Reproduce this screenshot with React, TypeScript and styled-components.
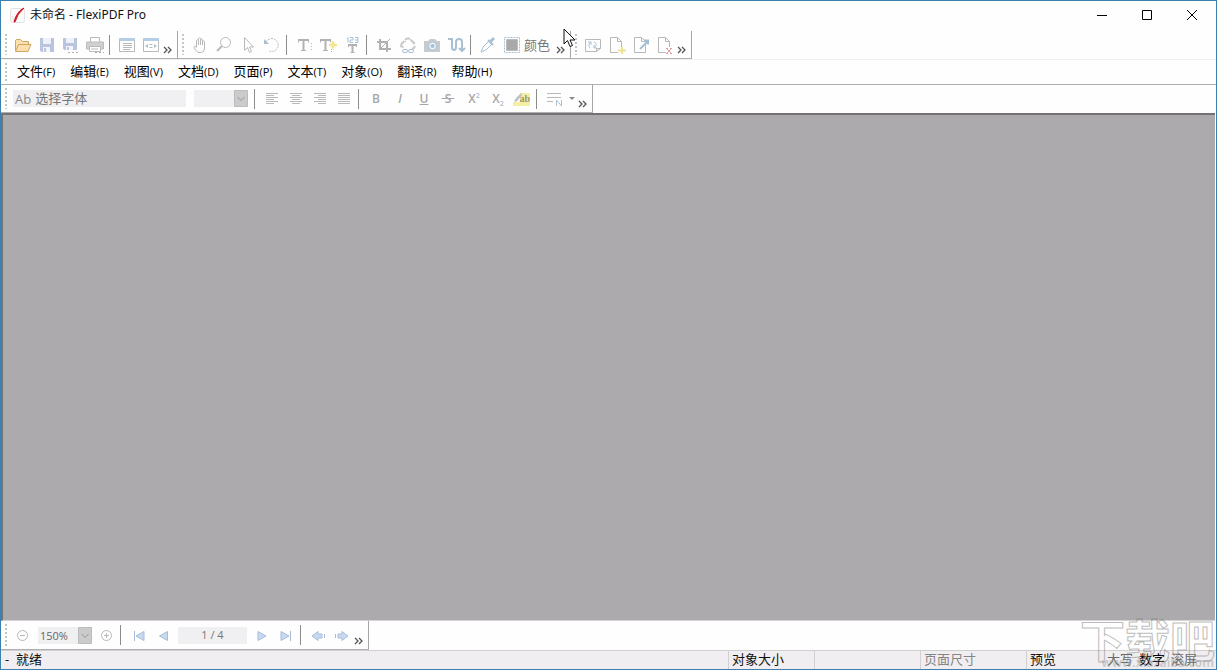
import React from 'react';
import styled, { createGlobalStyle } from 'styled-components';

const GlobalStyle = createGlobalStyle`
  * { box-sizing: border-box; }
  body { margin: 0; }
  body, button, input, select {
    font-family: 'Open Sans', 'Noto Sans CJK SC', sans-serif;
  }
`;

const Window = styled.div`
  position: relative;
  display: flex;
  flex-direction: column;
  height: 100vh;
  overflow: hidden;
  background: #fefefe;
  border: 1px solid #3d7fae;
  color: #111;
  font-size: 13px;
`;

const TitleBar = styled.header`
  display: flex;
  align-items: center;
  flex: none;
  height: 30px;
  padding: 0 2px 2px 8px;
`;

const Title = styled.h1`
  flex: 1;
  margin: 0 0 0 4px;
  font-family: 'Noto Sans', 'Noto Sans CJK SC', sans-serif;
  font-size: 12px;
  font-weight: 400;
  line-height: 20px;
`;

const WindowButton = styled.button`
  display: grid;
  place-items: center;
  width: 45px;
  height: 28px;
  padding: 0;
  border: 0;
  background: none;
`;

const ToolbarRow = styled.div<{ $height: number }>`
  display: flex;
  flex: none;
  height: ${(p) => p.$height}px;
`;

const ToolGroup = styled.div`
  display: flex;
  align-items: center;
  border-right: 1px solid #a5a5a5;
  border-bottom: 1px solid #b0b0b0;
`;

const Grip = styled.span`
  align-self: stretch;
  flex: none;
  width: 2px;
  margin: 3px 4px 3px 4px;
  background: repeating-linear-gradient(#c4c4c4 0 2px, transparent 2px 4px);
`;

const Separator = styled.span`
  flex: none;
  width: 1px;
  height: 20px;
  margin: 0 5px 0 2px;
  background: #8c8c8c;
`;

const ToolButton = styled.button<{ $wide?: boolean }>`
  display: flex;
  align-items: center;
  justify-content: center;
  flex: none;
  gap: 2px;
  width: ${(p) => (p.$wide ? 'auto' : '24px')};
  height: 24px;
  padding: 0 ${(p) => (p.$wide ? '2px' : '0')};
  border: 0;
  background: none;
  color: #777;
  font-size: 13px;
  line-height: 20px;
`;

const MoreButton = styled.button`
  display: grid;
  place-items: center;
  align-self: flex-end;
  flex: none;
  width: 9px;
  height: 16px;
  margin: 0 5px 0 0;
  padding: 0;
  border: 0;
  background: none;
`;

const Gap = styled.span<{ $size: number }>`
  flex: none;
  width: ${(p) => p.$size}px;
`;

const MenuBar = styled.nav`
  display: flex;
  align-items: center;
  flex: none;
  height: 26px;
  border-top: 1px solid #f0f0f0;
  border-bottom: 1px solid #b0b0b0;
`;

const MenuList = styled.div`
  display: flex;
  gap: 15px;
  padding: 0 0 2px 6px;
`;

const MenuButton = styled.button`
  padding: 0;
  border: 0;
  background: none;
  color: #000;
  font-size: 13px;
  line-height: 20px;
  white-space: nowrap;

  small { font-size: 11px; }
`;

const Field = styled.label<{ $width: number }>`
  display: flex;
  align-items: center;
  flex: none;
  gap: 4px;
  width: ${(p) => p.$width}px;
  height: 17px;
  padding: 0 2px;
  overflow: hidden;
  background: #f0eff1;
  color: #8a8a8a;
  font-size: 13px;
  line-height: 16px;
`;

const FieldInput = styled.input<{ $center?: boolean }>`
  flex: 1;
  min-width: 0;
  height: 17px;
  padding: 0 0 2px;
  border: 0;
  background: none;
  color: #777;
  font-size: ${(p) => (p.$center ? 11 : 13)}px;
  text-align: ${(p) => (p.$center ? 'center' : 'left')};
`;

const SelectBox = styled.span`
  display: flex;
  flex: none;
  position: relative;
  width: 54px;
  height: 17px;

  svg {
    position: absolute;
    right: 0;
    top: 0;
    pointer-events: none;
  }
`;

const Select = styled.select`
  appearance: none;
  width: 100%;
  height: 17px;
  padding: 0 14px 0 2px;
  border: 0;
  border-radius: 0;
  background: #f0eff1;
  color: #666;
  font-size: 11px;
`;

const Workspace = styled.main`
  flex: 1;
  min-height: 0;
  margin-right: 1px;
  border-top: 2px solid #747274;
  border-left: 2px solid #747478;
  border-bottom: 1px solid #d4d4d4;
  background: #acaaac;
`;

const StatusBar = styled.footer`
  display: flex;
  flex: none;
  height: 19px;
  border-top: 1px solid #cfcfcf;
  background: #f0eef0;
  line-height: 17px;
`;

const StatusCell = styled.span<{ $width?: number; $muted?: boolean }>`
  flex: ${(p) => (p.$width ? 'none' : '1')};
  width: ${(p) => (p.$width ? `${p.$width}px` : 'auto')};
  padding-left: ${(p) => (p.$width ? 3 : 4)}px;
  border-left: ${(p) => (p.$width ? '1px solid #d2d0d2' : '0')};
  color: ${(p) => (p.$muted ? '#858585' : '#111')};
  white-space: pre;
`;

const LockKeys = styled.span`
  display: flex;
  gap: 6px;
  padding-right: 19px;
`;

const LockKey = styled.span<{ $on?: boolean }>`
  color: ${(p) => (p.$on ? '#000' : '#6a6a6a')};
`;

const Watermark = styled.div`
  position: absolute;
  right: 1px;
  bottom: 0;
  color: transparent;
  font-family: 'Noto Sans CJK SC', sans-serif;
  font-size: 45px;
  font-weight: 700;
  line-height: 60px;
  pointer-events: none;
  -webkit-text-stroke: 1px rgba(120, 120, 120, 0.5);
`;

const WatermarkSite = styled.div`
  position: absolute;
  right: 2px;
  bottom: 0;
  color: rgba(130, 130, 130, 0.35);
  font-size: 12px;
  font-weight: 700;
  line-height: 12px;
  pointer-events: none;
`;

const Pointer = styled.svg`
  position: absolute;
  left: 562px;
  top: 27px;
  pointer-events: none;
`;

const G = '#b9b9b9';
const B = '#a9c0d3';

const icons: Record<string, React.ReactNode> = {
  open: (
    <g fill="#fbe0ae" stroke="#cfa566">
      <path d="M2.500 15.500v-10l1-1h4l2 2h6v3" />
      <path d="M2.500 16.500l3-7h12.500l-3 7z" />
    </g>
  ),
  save: (
    <g>
      <path d="M3 3h14v14H4.500L3 15.500z" fill="#b9c4e0" />
      <path d="M6 3h8v6H6z" fill="#eef1f8" />
      <path d="M6 12h7v5H6z" fill="#f4f5fa" />
      <path d="M7 13h2v4H7z" fill="#b9c4e0" />
    </g>
  ),
  saveAs: (
    <g>
      <path d="M2 3h14v12H3.500L2 13.500z" fill="#b9c4e0" />
      <path d="M5 3h8v5H5z" fill="#eef1f8" />
      <path d="M5 11h7v4H5z" fill="#f4f5fa" />
      <path d="M6 12h2v3H6z" fill="#b9c4e0" />
      <path d="M7 17.500h2M11 17.500h2M15 17.500h2" stroke="#b0b0b0" />
    </g>
  ),
  print: (
    <g>
      <path d="M5.500 7V2.500h9V7" fill="#fff" stroke={G} />
      <path d="M1.500 7h17v7h-17z" fill="#d0d0d0" stroke="#bcbcbc" />
      <path d="M4.500 11.500h11v5h-11z" fill="#fff" stroke={G} />
      <path d="M6 14h7" stroke={G} />
      <path d="M10 17.500h2M14 17.500h2M18 17.500h1" stroke="#a5a5a5" />
    </g>
  ),
  panel: (
    <g>
      <path d="M2.500 3.500h15v13h-15z" fill="#fff" stroke={G} />
      <path d="M2 3h16v3H2z" fill="#b5cde6" />
      <path d="M6 8.500h9M6 10.500h9M6 12.500h9M6 14.500h7" stroke={G} />
    </g>
  ),
  fitPanel: (
    <g>
      <path d="M2.500 3.500h15v13h-15z" fill="#fff" stroke={G} />
      <path d="M2 3h16v3H2z" fill="#b5cde6" />
      <path d="M8.500 9.500h3M8.500 12.500h3" stroke={G} />
      <path d="M7 9v4l-3-2zM13 9v4l3-2z" fill={B} />
    </g>
  ),
  hand: (
    <path
      d="M6.500 12V5.500q1-1.500 2 0V10V3.500q1-1.500 2 0V10V4.500q1-1.500 2 0V10V6.500q1-1.500 2 0V13q0 4-3 4.500H8Q6 16 4 12.500 3.500 10 6.500 12.500"
      fill="none" stroke={G}
    />
  ),
  zoom: (
    <g fill="none" stroke={G}>
      <circle cx="11.500" cy="7.500" r="5" />
      <path d="M8 11l-5 5" strokeWidth="2" />
    </g>
  ),
  arrow: <path d="M6.500 2.500v13l3-3 2 5 2-1-2-4.500h4z" fill="none" stroke={G} />,
  rotate: (
    <g fill="none">
      <path d="M4 7a6.500 6.500 0 1 1 3 9" stroke={G} strokeDasharray="2 1" />
      <path d="M2 4v5h5z" fill={B} />
    </g>
  ),
  text: (
    <g fill="none" stroke="#b2b2b2">
      <path d="M4.500 7.500v-3h10v3M7 15.500h5" />
      <path d="M4 5h11M9.500 5v11" strokeWidth="2" />
      <path d="M17.500 8v9" stroke={G} strokeDasharray="1 2" />
    </g>
  ),
  textNew: (
    <g fill="none" stroke="#b2b2b2">
      <path d="M2.500 7.500v-3h10v3M5 15.500h5" />
      <path d="M2 5h11M7.500 5v11" strokeWidth="2" />
      <path d="M13.500 14v3" strokeDasharray="1 1" />
      <path d="M15 6v8M11 10h8" stroke="#f3e48c" strokeWidth="2" />
      <path d="M12.500 7.500l5 5M17.500 7.500l-5 5" stroke="#f6eba6" />
    </g>
  ),
  textNumber: (
    <g fill="none">
      <path d="M5 3.500l1-1v5M8 2.500h3V5H8v2.500h3M13 2.500h3v5h-3M13 5h3" stroke={B} />
      <path d="M6.500 12v-2.500h8V12M8.500 17.500h4" stroke="#b2b2b2" />
      <path d="M6 10h9M10.500 10v8" stroke="#b2b2b2" strokeWidth="2" />
    </g>
  ),
  crop: (
    <g fill="none" stroke="#b2b2b2">
      <path d="M6 4v10h11M3 7h10v10" strokeWidth="2" />
      <path d="M7 13l9-9" />
    </g>
  ),
  link: (
    <g fill="none" stroke="#c8c8c8">
      <path d="M5.500 12.500L3 11l1-3 2-1M7 5l2-1.500h3M13 5l3 3-1 1M17 11l-1 2-2 1" strokeWidth="2" />
      <path d="M5 6l3 1M12 4l2 3" />
      <rect x="4.500" y="14.500" width="5" height="3" rx="1.500" stroke={B} />
      <rect x="10.500" y="14.500" width="5" height="3" rx="1.500" stroke={B} />
    </g>
  ),
  camera: (
    <g>
      <path d="M2 6h4l2-2h5l2 2h3v11H2z" fill="#c6cbd0" />
      <circle cx="10.500" cy="11" r="4" fill="#eef5fa" stroke="#a9c3d8" />
      <circle cx="10.500" cy="11" r="2" fill={B} />
    </g>
  ),
  flow: (
    <g fill="none" stroke={B} strokeWidth="2">
      <path d="M2 4h4v8q0 3 2 3t2-3V7q0-3 3-3t3 3v8" />
      <path d="M13 13l3 3 3-3" />
    </g>
  ),
  dropper: (
    <g fill="none" stroke={B}>
      <path d="M3 17l2-5 6-6 3 3-6 6z" />
      <path d="M10 5l5 5" strokeWidth="2" />
      <path d="M12 7l4-4" strokeWidth="3" />
    </g>
  ),
  color: (
    <g>
      <path d="M2.500 2.500h15v15h-15z" fill="none" stroke={B} strokeDasharray="2 1" />
      <path d="M5 5h10v10H5z" fill="#a9a9a9" />
      <path d="M4.500 4.500h11v11h-11z" fill="none" stroke="#bdbdbd" />
    </g>
  ),
  refreshPage: (
    <g fill="none">
      <path d="M2.500 4.500h15v9l-4 3h-11zM13.500 16.500v-3h4" stroke={G} />
      <path d="M7 13q-3-3 0-5l1-1M5 7h3v3M11 7q4 2 1 5l-1 1M14 13h-3v-3" stroke={B} />
    </g>
  ),
  addPage: (
    <g>
      <path d="M3.500 2.500h7l4 4v11h-11zM10.500 2.500v4h4" fill="none" stroke={G} />
      <path d="M11 12h8v8h-8z" fill="#fefefe" />
      <path d="M15 12v7M11 15.500h8" stroke="#f0e290" strokeWidth="2" />
    </g>
  ),
  editPage: (
    <g>
      <path d="M3.500 2.500h7l4 4v11h-11zM10.500 2.500v4h4" fill="none" stroke={G} />
      <path d="M9 14l8-8M13 5.500h4v4" fill="none" stroke="#a3bfd6" strokeWidth="2" />
    </g>
  ),
  deletePage: (
    <g>
      <path d="M3.500 2.500h7l4 4v11h-11zM10.500 2.500v4h4" fill="none" stroke={G} />
      <path d="M11 12h7v7h-7z" fill="#fefefe" />
      <path d="M11.500 13.500l5 5M16.500 13.500l-5 5M11 13.500h2M15 13.500h2M11 18.500h2M15 18.500h2" stroke="#dfa0a0" />
    </g>
  ),
  alignLeft: <path d="M4 4.500h12M4 6.500h8M4 8.500h12M4 10.500h8M4 12.500h12M4 14.500h8" stroke={G} />,
  alignCenter: <path d="M4 4.500h12M6 6.500h8M4 8.500h12M6 10.500h8M4 12.500h12M6 14.500h8" stroke={G} />,
  alignRight: <path d="M4 4.500h12M8 6.500h8M4 8.500h12M8 10.500h8M4 12.500h12M8 14.500h8" stroke={G} />,
  justify: <path d="M4 4.500h12M4 6.500h12M4 8.500h12M4 10.500h12M4 12.500h12M4 14.500h12" stroke={G} />,
  highlight: (
    <g>
      <path d="M1 13h17v4H1zM8 4h10v10H8z" fill="#f6efa2" />
      <path d="M2 12l3-4 2 2-3 3zM5 8l4-4 1 2-3 4z" fill="#b9c3c8" />
    </g>
  ),
  lines: (
    <g fill="none">
      <path d="M3 4.500h14M3 8.500h14M3 12.500h6" stroke={G} />
      <path d="M12.500 17v-6l5 6v-6" stroke={B} />
    </g>
  ),
  minus: (
    <g fill="none" stroke={G}>
      <circle cx="9.500" cy="10.500" r="5" />
      <path d="M7 10.500h5" />
    </g>
  ),
  plus: (
    <g fill="none" stroke={G}>
      <circle cx="10.500" cy="10.500" r="5" />
      <path d="M8 10.500h5M10.500 8v5" />
    </g>
  ),
  first: <path d="M5.500 6v10M15 6.500v9L7 11z" fill="#c9daf0" stroke="#a5bddb" />,
  previous: <path d="M14.500 6.500v9l-8-4.500z" fill="#c9daf0" stroke="#a5bddb" />,
  next: <path d="M6 6.500v9l8-4.500z" fill="#c9daf0" stroke="#a5bddb" />,
  last: <path d="M14.500 6v10M5 6.500v9l8-4.500z" fill="#c9daf0" stroke="#a5bddb" />,
  back: (
    <g stroke="#a5bddb">
      <path d="M4 11l6-4.500V9h4v4h-4v2.500z" fill="#c9daf0" />
      <path d="M16.500 9v4" />
    </g>
  ),
  forward: (
    <g stroke="#a5bddb">
      <path d="M16 11l-6-4.500V9H6v4h4v2.500z" fill="#c9daf0" />
      <path d="M3.500 9v4" />
    </g>
  ),
};

const Icon = ({ name }: { name: string }) => (
  <svg width="20" height="20" viewBox="0 0 20 20" aria-hidden="true">{icons[name]}</svg>
);

const Tools = ({ names }: { names: string[] }) => (
  <>
    {names.map((name) => (
      <ToolButton key={name} aria-label={name}><Icon name={name} /></ToolButton>
    ))}
  </>
);

const More = () => (
  <MoreButton aria-label="more">
    <svg width="9" height="8" viewBox="0 0 9 8">
      <path d="M1 1l3 3-3 3M5 1l3 3-3 3" fill="none" stroke="#555" strokeWidth="1.300" />
    </svg>
  </MoreButton>
);

const DropArrow = () => (
  <svg width="14" height="17" viewBox="0 0 14 17" aria-hidden="true">
    <path d="M.5.5h13v16H.5z" fill="#cbcbcb" stroke="#bcbcbc" />
    <path d="M3.500 7L7 10.500 10.500 7" fill="none" stroke="#959595" />
  </svg>
);

const Glyph = styled.span<{ $kind: string }>`
  color: #a6a6a6;
  font-size: 12px;
  line-height: 16px;
  font-weight: 600;
  font-style: ${(p) => (p.$kind === 'italic' ? 'italic' : 'normal')};
  text-decoration: ${(p) =>
    p.$kind === 'underline' ? 'underline' : p.$kind === 'strike' ? 'line-through' : 'none'};

  sup, sub { color: ${B}; font-size: 7px; line-height: 0; }
`;

const HighlightMark = styled.span`
  display: grid;
  place-items: center end;

  > * { grid-area: 1 / 1; }
  b {
    padding-right: 2px;
    color: #9a9a70;
    font-family: 'Liberation Serif', serif;
    font-size: 10px;
    line-height: 12px;
  }
`;

const menus = [
  ['文件', 'F'], ['编辑', 'E'], ['视图', 'V'], ['文档', 'D'], ['页面', 'P'],
  ['文本', 'T'], ['对象', 'O'], ['翻译', 'R'], ['帮助', 'H'],
];

export default function App() {
  return (
    <Window>
      <GlobalStyle />
      <TitleBar>
        <svg width="17" height="17" viewBox="0 0 17 17" aria-hidden="true">
          <rect x="1.500" y="1.500" width="14" height="14" rx="2" fill="#fbfbfb" stroke="#e2e2e2" />
          <path d="M3 9q2 2 2 6Q7 6 14 1" fill="none" stroke="#eed6d6" />
          <path d="M5 15Q8 4 15 1 8 7 6 15z" fill="#cc1820" stroke="#cc1820" />
        </svg>
        <Title>未命名 - FlexiPDF Pro</Title>
        <WindowButton aria-label="minimize">
          <svg width="10" height="10"><path d="M0 5.500h10" stroke="#000" /></svg>
        </WindowButton>
        <WindowButton aria-label="maximize">
          <svg width="10" height="10"><path d="M.5.5h9v9h-9z" fill="none" stroke="#000" /></svg>
        </WindowButton>
        <WindowButton aria-label="close">
          <svg width="10" height="10"><path d="M0 0l10 10M10 0L0 10" stroke="#000" /></svg>
        </WindowButton>
      </TitleBar>

      <ToolbarRow $height={28}>
        <ToolGroup>
          <Grip />
          <Tools names={['open', 'save', 'saveAs', 'print']} />
          <Separator />
          <Tools names={['panel', 'fitPanel']} />
          <More />
        </ToolGroup>
        <ToolGroup>
          <Grip />
          <Tools names={['hand', 'zoom', 'arrow', 'rotate']} />
          <Separator />
          <Tools names={['text', 'textNew', 'textNumber']} />
          <Separator />
          <Tools names={['crop', 'link', 'camera', 'flow']} />
          <Separator />
          <Tools names={['dropper']} />
          <ToolButton $wide><Icon name="color" />颜色</ToolButton>
          <Gap $size={4} />
          <More />
        </ToolGroup>
        <ToolGroup>
          <Grip />
          <Tools names={['refreshPage', 'addPage', 'editPage', 'deletePage']} />
          <More />
        </ToolGroup>
      </ToolbarRow>

      <MenuBar>
        <Grip />
        <MenuList>
          {menus.map(([label, key]) => (
            <MenuButton key={key}>{label}<small>({key})</small></MenuButton>
          ))}
        </MenuList>
      </MenuBar>

      <ToolbarRow $height={28}>
        <ToolGroup>
          <Grip />
          <Gap $size={2} />
          <Field $width={173}>
            Ab
            <FieldInput aria-label="字体" defaultValue="选择字体" />
          </Field>
          <Gap $size={8} />
          <SelectBox>
            <Select aria-label="字号"><option> </option></Select>
            <DropArrow />
          </SelectBox>
          <Gap $size={4} />
          <Separator />
          <Tools names={['alignLeft', 'alignCenter', 'alignRight', 'justify']} />
          <Separator />
          <ToolButton><Glyph $kind="bold">B</Glyph></ToolButton>
          <ToolButton><Glyph $kind="italic">I</Glyph></ToolButton>
          <ToolButton><Glyph $kind="underline">U</Glyph></ToolButton>
          <ToolButton><Glyph $kind="strike">&nbsp;S&nbsp;</Glyph></ToolButton>
          <Gap $size={2} />
          <ToolButton><Glyph $kind="sup">X<sup>2</sup></Glyph></ToolButton>
          <ToolButton><Glyph $kind="sub">X<sub>2</sub></Glyph></ToolButton>
          <ToolButton><HighlightMark><Icon name="highlight" /><b>ab</b></HighlightMark></ToolButton>
          <Separator />
          <Tools names={['lines']} />
          <svg width="12" height="8" aria-hidden="true"><path d="M3 2h6L6 5z" fill="#8a8a8a" /></svg>
          <More />
        </ToolGroup>
      </ToolbarRow>

      <Workspace />

      <ToolbarRow $height={29}>
        <ToolGroup>
          <Grip />
          <Tools names={['minus']} />
          <Gap $size={3} />
          <SelectBox>
            <Select aria-label="缩放"><option>150%</option></Select>
            <DropArrow />
          </SelectBox>
          <Gap $size={2} />
          <Tools names={['plus']} />
          <Separator />
          <Gap $size={1} />
          <Tools names={['first', 'previous']} />
          <Gap $size={3} />
          <Field $width={69}>
            <FieldInput $center aria-label="页码" defaultValue="1 / 4" />
          </Field>
          <Gap $size={3} />
          <Tools names={['next', 'last']} />
          <Separator />
          <Tools names={['back', 'forward']} />
          <More />
        </ToolGroup>
      </ToolbarRow>

      <StatusBar>
        <StatusCell>-  就绪</StatusCell>
        <StatusCell $width={86}>对象大小</StatusCell>
        <StatusCell $width={106} />
        <StatusCell $width={106} $muted>页面尺寸</StatusCell>
        <StatusCell $width={81}>预览</StatusCell>
        <LockKeys>
          <LockKey>大写</LockKey>
          <LockKey $on>数字</LockKey>
          <LockKey>滚屏</LockKey>
        </LockKeys>
      </StatusBar>

      <Watermark aria-hidden="true">下载吧</Watermark>
      <WatermarkSite aria-hidden="true">www.xiazaiba.com</WatermarkSite>
      <Pointer width="13" height="21" viewBox="0 0 13 21" aria-hidden="true">
        <path d="M1 1v15l3.500-3.500L7 18.500l2.500-1L7 12h5z" fill="#fff" stroke="#111" />
      </Pointer>
    </Window>
  );
}
